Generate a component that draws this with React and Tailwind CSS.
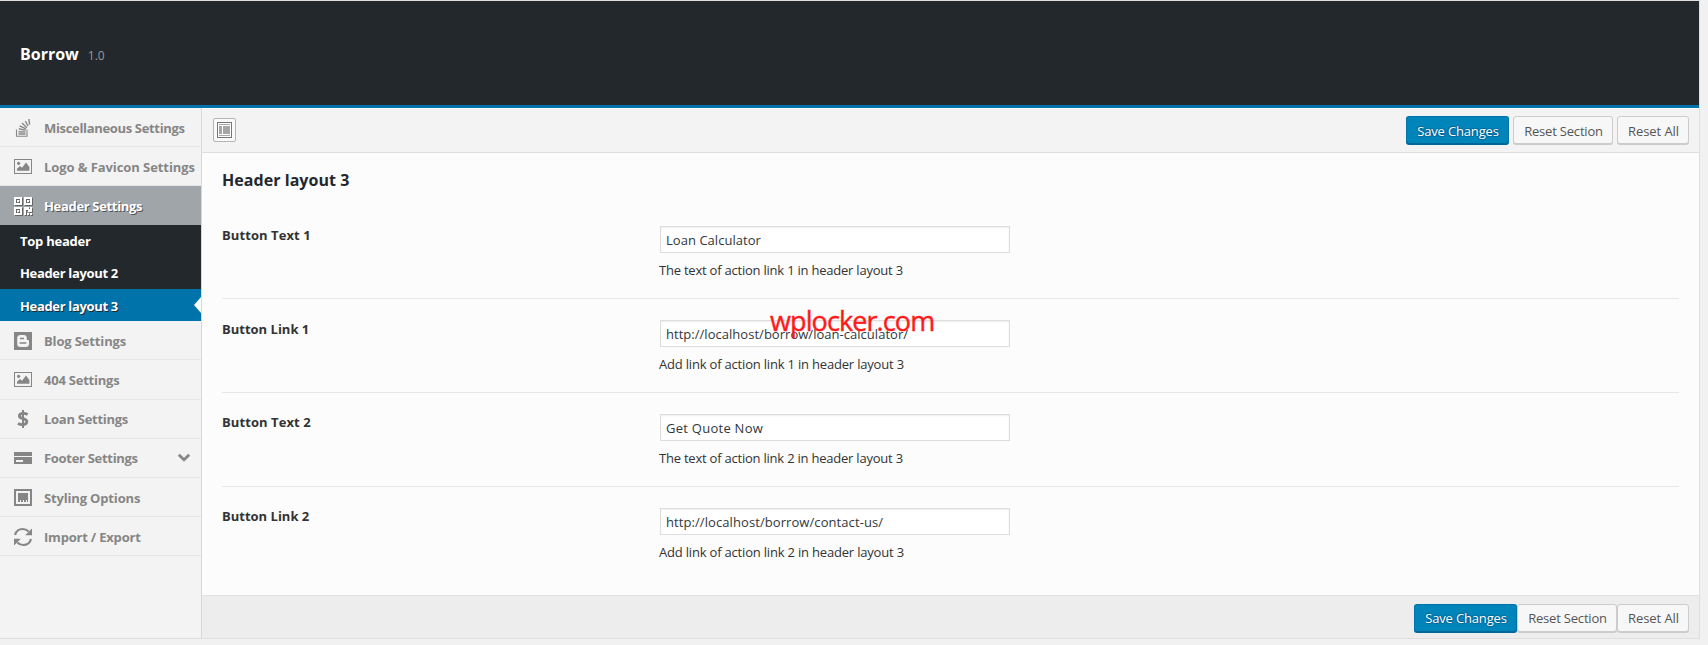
import React from "react";

const svgProps = { width: 20, height: 20, viewBox: "0 0 20 20", fill: "currentColor", className: "shrink-0" };

function StackIcon() {
  return (
    <svg {...svgProps}>
      <path d="M2.5 11.5V18.3H13V11.5" fill="none" stroke="currentColor" strokeWidth="1.1" />
      <g fill="none" stroke="currentColor" strokeWidth="1.4">
        <path d="M4.5 16H11.5M4.5 13.7L11.5 14.1M4.8 10.8L11.6 12.4M5.6 7.8L11.9 10.9M8 5L12.8 9.8M11.4 3L14 8.2M14.9 1L15.6 6.6" />
      </g>
    </svg>
  );
}

function ImageIcon() {
  return (
    <svg {...svgProps}>
      <path fillRule="evenodd" d="M0 2H18V17H0ZM1 3V16H17V3Z" />
      <circle cx="4.6" cy="6.3" r="1.6" />
      <path d="M3 13.8V11.8L6 9L8 10.8L12 5.4L15.4 10V13.8Z" />
    </svg>
  );
}

function QrIcon() {
  return (
    <svg {...svgProps} className="shrink-0 drop-shadow-[1px_1px_0_#666]" shapeRendering="crispEdges">
      <path fillRule="evenodd" d="M0 1H8V9H0ZM2 3V7H6V3ZM10 1H18V9H10ZM12 3V7H16V3ZM0 11H8V19H0ZM2 13V17H6V13Z" />
      <path d="M3 4H5V6H3ZM13 4H15V6H13ZM3 14H5V16H3ZM10 11H15V13H16V11H18V16H14V14H12V19H10ZM13 17H15V19H13ZM16 17H18V19H16Z" />
    </svg>
  );
}

function BloggerIcon() {
  return (
    <svg {...svgProps}>
      <path
        fillRule="evenodd"
        d="M0 1H18V19H0ZM6.2 4C4.4 4 3.2 5.2 3.2 7V13C3.2 14.8 4.4 16 6.2 16H12C13.8 16 15 14.8 15 13V10.4C15 9.5 14.6 9 13.6 9C13 9 12.8 8.7 12.8 8V7C12.8 5.2 11.6 4 9.8 4Z"
      />
      <path d="M6 6.8H10V8.2H6ZM5.6 11.2H12.4V12.8H5.6Z" />
    </svg>
  );
}

function DollarIcon() {
  return (
    <svg {...svgProps} fill="none" stroke="currentColor">
      <path d="M13.6 5.6C12.4 4.7 11 4.4 9.4 4.4C7 4.4 5.4 5.2 5.4 7C5.4 10.5 12.8 8.8 12.8 12.6C12.8 14.6 11 15.6 8.6 15.6C6.8 15.6 5.2 15.2 4 14.3" strokeWidth="2.9" />
      <path d="M9 1V19" strokeWidth="2" />
    </svg>
  );
}

function CardIcon() {
  return (
    <svg {...svgProps} shapeRendering="crispEdges">
      <path fillRule="evenodd" d="M0 4H18V8H0ZM0 9H18V16H0ZM2 12V14H9V12Z" />
    </svg>
  );
}

function FrameIcon() {
  return (
    <svg {...svgProps} shapeRendering="crispEdges">
      <path fillRule="evenodd" d="M0 1H18V18H0ZM2 3V16H16V3Z" />
      <path d="M4 5H14V14H13V12H12V14H10V12H9V14H7V12H6V14H4Z" />
    </svg>
  );
}

function RefreshIcon() {
  return (
    <svg {...svgProps}>
      <g fill="none" stroke="currentColor" strokeWidth="2.2">
        <path d="M1 8C2 4.3 5 2 8.6 2C11 2 13 2.9 14.6 4.6" />
        <path d="M17 12C16 15.7 13 18 9.4 18C7 18 5 17.1 3.4 15.4" />
      </g>
      <path d="M18 1.4V8.2H11.2ZM0 18.6V11.8H6.8Z" />
    </svg>
  );
}

function Chevron() {
  return (
    <svg width="14" height="10" viewBox="0 0 14 10" fill="none" stroke="#868686" strokeWidth="2.7" className="ml-auto mr-[10px]">
      <path d="M1.8 1.8L7 6.8L12.2 1.8" />
    </svg>
  );
}

function NavItem({ icon, label, size = "h-[39px] pt-0.5", tracking, active, open }) {
  return (
    <li
      className={
        "flex items-center border-b pl-[14px] text-[13px] font-bold " +
        size +
        (active
          ? " border-[#a0a5aa] bg-[#a0a5aa] text-white [text-shadow:1px_1px_#555]"
          : " border-[#e7e7e7] text-[#868686]")
      }
    >
      {icon}
      <span className={"ml-[10px] whitespace-nowrap leading-5 " + tracking}>{label}</span>
      {open && <Chevron />}
    </li>
  );
}

function SubItem({ label, tracking, active }) {
  return (
    <li
      className={
        "relative flex h-8 items-center pl-5 text-[13px] font-bold text-white " +
        (active ? "bg-[#0073aa] pt-px [text-shadow:1px_1px_#23282d]" : "bg-[#23282d]")
      }
    >
      <span className={"whitespace-nowrap leading-5 " + tracking}>{label}</span>
      {active && (
        <span className="absolute right-0 top-2 size-0 border-y-8 border-r-[7px] border-y-transparent border-r-[#fcfcfc]" />
      )}
    </li>
  );
}

function Actions({ pad }) {
  const plain =
    "flex h-[28px] items-center justify-center rounded-[3px] border border-[#ccc] bg-[#f7f7f7] pl-px text-[#555] shadow-[0_1px_0_#ccc] " +
    pad;
  return (
    <>
      <button
        className={
          "flex h-[28px] w-[103px] items-center justify-center rounded-[3px] border border-[#0073aa] border-b-[#006799] bg-[#0085ba] pl-px tracking-[-0.16px] text-white shadow-[0_1px_0_#006799] [text-shadow:0_-1px_1px_#006799,1px_0_1px_#006799,0_1px_1px_#006799,-1px_0_1px_#006799] " +
          pad
        }
      >
        Save Changes
      </button>
      <button className={plain + " w-[100px] tracking-[-0.19px]"}>Reset Section</button>
      <button className={plain + " w-[72px] tracking-[-0.07px]"}>Reset All</button>
    </>
  );
}

function Field({ label, labelTracking, labelPad = "pt-5", value, valueTracking, desc, descTracking, last, children }) {
  return (
    <div className={"flex h-[94px] " + (last ? "" : "border-b border-[#e7e7e7]")}>
      <div className={"w-[437px] text-[13px] font-bold leading-5 text-[#333] " + labelPad + " " + labelTracking}>{label}</div>
      <div className="relative pt-[21px]">
        <input
          readOnly
          value={value}
          className={
            "ml-px block h-[27px] w-[350px] border border-[#ddd] bg-white px-[5px] text-[13px] text-[#32373c] shadow-[inset_0_1px_2px_rgba(0,0,0,0.07)] outline-none " +
            valueTracking
          }
        />
        <p className={"mt-[7px] whitespace-nowrap text-[13px] leading-5 text-[#333] " + descTracking}>{desc}</p>
        {children}
      </div>
    </div>
  );
}

export default function App() {
  return (
    <div className="h-[645px] w-[1708px] overflow-hidden bg-[#f1f1f1] font-['Open_Sans','Noto_Sans',sans-serif] text-[13px]">
      <div className="flex h-[639px] w-[1700px] flex-col border-b border-r border-t border-[#dedede]">
        <header className="flex h-[107px] shrink-0 items-baseline border-b-[3px] border-[#0073aa] bg-[#23282d] pl-5 pt-[41px]">
          <h1 className="text-[16px] font-bold leading-6 tracking-[0px] text-white">Borrow</h1>
          <span className="ml-[9px] text-[12px] text-[#999]">1.0</span>
        </header>

        <div className="flex min-h-0 flex-1">
          <aside className="w-[202px] shrink-0 border-r border-[#d8d8d8] bg-[#f3f3f3]">
            <ul>
              <NavItem icon={<StackIcon />} label="Miscellaneous Settings" tracking="tracking-[-0.33px]" />
              <NavItem icon={<ImageIcon />} label="Logo & Favicon Settings" tracking="tracking-[-0.08px]" />
              <NavItem icon={<QrIcon />} label="Header Settings" tracking="tracking-[-0.33px]" active />
              <SubItem label="Top header" tracking="tracking-[-0.25px]" />
              <SubItem label="Header layout 2" tracking="tracking-[-0.34px]" />
              <SubItem label="Header layout 3" tracking="tracking-[-0.34px]" active />
              <NavItem icon={<BloggerIcon />} label="Blog Settings" tracking="tracking-[-0.14px]" />
              <NavItem icon={<ImageIcon />} label="404 Settings" tracking="tracking-[-0.22px]" size="h-[40px] pt-px" />
              <NavItem icon={<DollarIcon />} label="Loan Settings" tracking="tracking-[-0.28px]" size="h-[39px]" />
              <NavItem icon={<CardIcon />} label="Footer Settings" tracking="tracking-[-0.3px]" size="h-[39px]" open />
              <NavItem icon={<FrameIcon />} label="Styling Options" tracking="tracking-[-0.16px]" />
              <NavItem icon={<RefreshIcon />} label="Import / Export" tracking="tracking-[-0.2px]" />
            </ul>
          </aside>

          <main className="flex min-w-0 flex-1 flex-col bg-[#fcfcfc]">
            <div className="flex h-[45px] shrink-0 justify-between border-b border-t border-b-[#dedede] border-t-white bg-[#f3f3f3] pl-[11px] pr-[10px] pt-[7px]">
              <button className="mt-[2px] flex h-6 w-[23px] items-center justify-center rounded-[2px] border border-[#b4b4b4] bg-[#fafafa]">
                <svg width="15" height="16" viewBox="0 0 15 16" shapeRendering="crispEdges">
                  <path d="M0 0H15V16H0Z" fill="#777" />
                  <path d="M1 1H14V15H1Z" fill="#fff" />
                  <path d="M2 2H13V3H2ZM2 4H5V12H2ZM6 4H13V12H6ZM2 13H13V14H2Z" fill="#a6a6a6" />
                </svg>
              </button>
              <div className="flex gap-1">
                <Actions pad="pt-[3px]" />
              </div>
            </div>

            <div className="min-h-0 flex-1 pl-[20px] pr-5">
              <h2 className="pt-[15px] text-[16px] font-bold leading-6 tracking-[0.05px] text-[#23282d]">Header layout 3</h2>
              <div className="mt-[13px]">
                <Field
                  label="Button Text 1"
                  labelTracking="tracking-[0.08px]"
                  value="Loan Calculator"
                  valueTracking="tracking-[0.04px]"
                  desc="The text of action link 1 in header layout 3"
                  descTracking="tracking-[-0.22px]"
                />
                <Field
                  label="Button Link 1"
                  labelTracking="tracking-normal"
                  value="http://localhost/borrow/loan-calculator/"
                  valueTracking="tracking-[0.03px]"
                  desc="Add link of action link 1 in header layout 3"
                  descTracking="tracking-[-0.19px]"
                >
                  <span className="absolute left-[111px] top-[2px] text-[27px] leading-10 tracking-[-0.9px] text-[#ff1a1a] [-webkit-text-stroke:0.4px_#ff1a1a]">
                    wplocker.com
                  </span>
                </Field>
                <Field
                  label="Button Text 2"
                  labelTracking="tracking-[0.08px]"
                  labelPad="pt-[19px]"
                  value="Get Quote Now"
                  valueTracking="tracking-[0.26px]"
                  desc="The text of action link 2 in header layout 3"
                  descTracking="tracking-[-0.22px]"
                />
                <Field
                  label="Button Link 2"
                  labelTracking="tracking-normal"
                  labelPad="pt-[19px]"
                  value="http://localhost/borrow/contact-us/"
                  valueTracking="tracking-[0.08px]"
                  desc="Add link of action link 2 in header layout 3"
                  descTracking="tracking-[-0.19px]"
                  last
                />
              </div>
            </div>

            <footer className="flex h-[43px] shrink-0 justify-end border-t border-[#e2e2e2] bg-[#ededed] pr-[10px] pt-2">
              <Actions pad="pt-px" />
            </footer>
          </main>
        </div>
      </div>
    </div>
  );
}
